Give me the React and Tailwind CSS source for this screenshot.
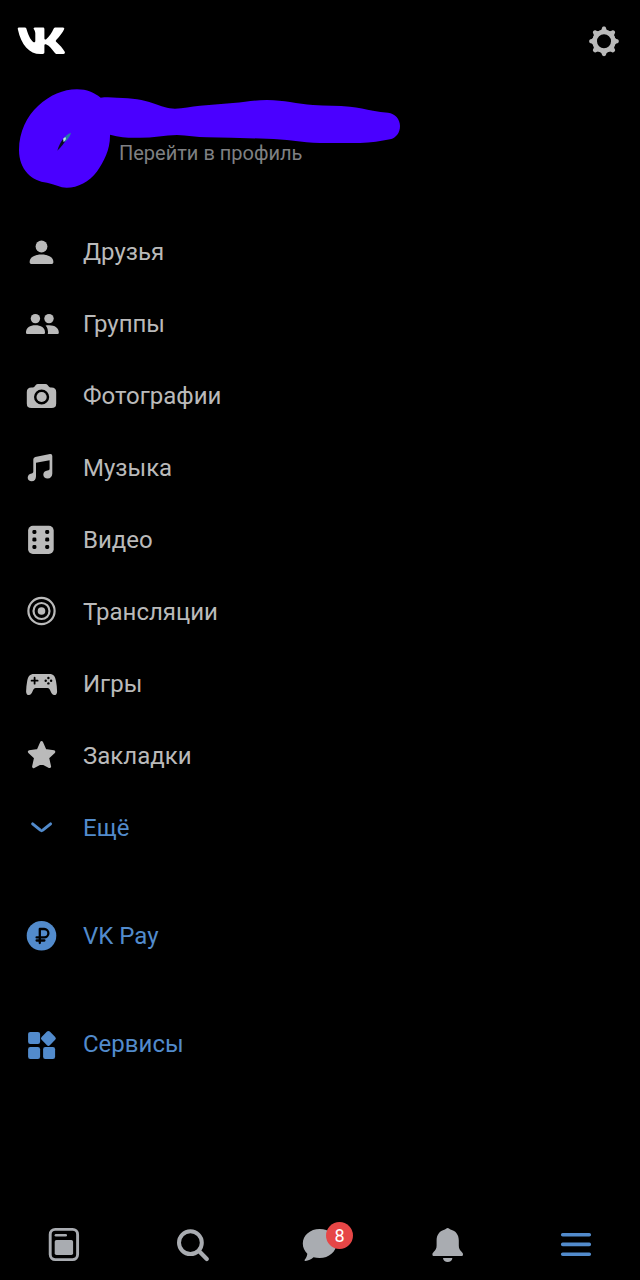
import { clsx } from 'clsx';

const Icon = ({ children }) => (
  <svg viewBox="0 0 40 40" className="w-10 h-10 flex-shrink-0" fill="currentColor" aria-hidden="true">
    {children}
  </svg>
);

const Logo = () => (
  <svg viewBox="0 0 50 28" className="h-7 w-[50px]" fill="#fff" aria-hidden="true">
    <path d="M1.8 .4H7.6C8.7 .4 9.2 .9 9.5 1.9C11 7.4 13.5 12.8 16.2 14.9C17.2 15.6 18.3 15.3 18.3 14V6.2C18.2 4.2 17.6 3.2 16.9 2.2C16.3 1.3 16.7 .4 17.8 .4H25.9C27 .4 27.4 1 27.4 2.1V11.6C27.4 12.7 28.4 12.9 29.2 12.2C32.3 9.5 34.8 5.7 36.6 1.8C37.1 .8 37.7 .4 38.8 .4H45.8C47.3 .4 47.6 1.3 47 2.6C45.6 5.7 42.6 9.6 39.4 12.7C38.5 13.6 38.6 14.2 39.4 15C43 18.3 45.8 21.4 47.6 24.6C48.4 26.1 47.7 27 46.3 27H40.1C39 27 38.4 26.6 37.7 25.7C35.1 22.1 32.4 18.7 29.4 17.4C28.2 16.9 27.4 17.3 27.4 18.6V25.3C27.4 26.5 26.9 27 25.7 27H23.6C12 27 4.2 17.6 .9 2.4C.6 1.2 .8 .4 1.8 .4Z" />
  </svg>
);

const teeth = [0, 45, 90, 135, 180, 225, 270, 315];

const GearIcon = () => (
  <Icon>
    <circle cx="20" cy="20.3" r="9.3" fill="none" stroke="currentColor" strokeWidth="4.6" />
    {teeth.map((angle) => (
      <path
        key={angle}
        transform={`rotate(${angle} 20 20.3)`}
        d="M14.8 10.2C17 9.6 17.7 8.4 18 6.9C18.4 5 21.6 5 22 6.9C22.3 8.4 23 9.6 25.2 10.2L24 12.4H16Z"
      />
    ))}
  </Icon>
);

const FriendsIcon = () => (
  <Icon>
    <circle cx="20.5" cy="14.5" r="5.9" />
    <path d="M8.7 29.5C8.7 25.3 13.6 22.4 20.5 22.4S32.3 25.3 32.3 29.5V30.6Q32.3 32 30.9 32H10.1Q8.7 32 8.7 30.6Z" />
  </Icon>
);

const GroupsIcon = () => (
  <Icon>
    <circle cx="14.4" cy="14.6" r="4.7" />
    <circle cx="28" cy="14.6" r="4.7" />
    <path d="M5 28.2C5 23.8 9 21.2 14.4 21.2S24 23.8 24 28.2V28.8Q24 30 22.8 30H6.2Q5 30 5 28.8Z" />
    <path d="M24.6 21.5C32.4 20.2 37.8 23.3 37.8 28.2V28.8Q37.8 30 36.6 30H26.8Q27.6 24.8 24.6 21.5Z" />
  </Icon>
);

const PhotosIcon = () => (
  <Icon>
    <path
      fillRule="evenodd"
      d="M14.6 9.2Q15.5 8 17 8H24.4Q25.9 8 26.8 9.2L28 10.7Q28.6 11.4 29.6 11.4H30.5Q35.2 11.4 35.2 16V27.4Q35.2 32 30.5 32H10.5Q5.8 32 5.8 27.4V16Q5.8 11.4 10.5 11.4H11.8Q12.8 11.4 13.4 10.7ZM20.6 13.4A7.6 7.6 0 1 0 20.6 28.6A7.6 7.6 0 1 0 20.6 13.4Z"
    />
    <circle cx="20.6" cy="21" r="5.1" />
  </Icon>
);

const MusicIcon = () => (
  <Icon>
    <path d="M12.3 11.4Q12.3 9.4 14.2 8.9L28.9 6.1Q31.3 5.7 31.3 8V25.4C31.3 28.3 29.6 30.4 26.5 30.4C24.2 30.4 22.3 29 22.3 26.7C22.3 24.3 24 22.9 26.5 22.5C28 22.3 28.6 22 28.6 20.6V12.2L15 14.8V28.3C15 31.3 13.4 33.3 10.6 33.3C8.4 33.3 6.7 31.9 6.7 29.8C6.7 27.3 8.3 25.9 10.6 25.5C11.8 25.3 12.3 24.8 12.3 23.6Z" />
  </Icon>
);

const VideoIcon = () => (
  <Icon>
    <rect x="7.1" y="5.8" width="25.6" height="28.2" rx="4.8" />
    {[12, 19.6, 27].map((y) => (
      <g key={y} fill="#000">
        <rect x="11.4" y={y - 2} width="4" height="4" rx="1.4" />
        <rect x="24.2" y={y - 2} width="4" height="4" rx="1.4" />
      </g>
    ))}
  </Icon>
);

const LiveIcon = () => (
  <Icon>
    <g fill="none" stroke="currentColor" strokeWidth="2.2">
      <circle cx="20.5" cy="19" r="13.1" />
      <circle cx="20.5" cy="19" r="8" />
    </g>
    <circle cx="20.5" cy="19" r="3.8" />
  </Icon>
);

const GamesIcon = () => (
  <Icon>
    <path d="M13 10H28.4C32.6 10 34.2 12.4 35 17C35.6 20.6 36.1 24 36.1 27.4C36.1 29.8 34.9 31 33.3 31C31.5 31 30.7 29.8 29.7 27.5C28.8 25.3 28.2 24 26.4 24H14.8C13 24 12.4 25.3 11.5 27.5C10.5 29.8 9.7 31 7.9 31C6.3 31 5.1 29.8 5.1 27.4C5.1 24 5.6 20.6 6.2 17C7 12.4 8.8 10 13 10Z" />
    <path d="M13.6 13.7V19.7M10.6 16.7H16.6" fill="none" stroke="#000" strokeWidth="1.8" strokeLinecap="round" />
    <g fill="#000">
      <circle cx="27.4" cy="14" r="1.2" />
      <circle cx="27.4" cy="19.4" r="1.2" />
      <circle cx="24.7" cy="16.7" r="1.2" />
      <circle cx="30.1" cy="16.7" r="1.2" />
    </g>
  </Icon>
);

const BookmarksIcon = () => (
  <Icon>
    <path
      d="M20.6 6.6L24 14.4L32.8 15.8L26.6 21.6L28.6 30.6L20.6 26.4L12.6 30.6L14.6 21.6L8.4 15.8L17.2 14.4Z"
      stroke="currentColor"
      strokeWidth="3"
      strokeLinejoin="round"
    />
  </Icon>
);

const ChevronIcon = () => (
  <Icon>
    <path
      d="M11.6 15.8L19.4 22.2Q20.6 23.1 21.8 22.2L29.6 15.8"
      fill="none"
      stroke="currentColor"
      strokeWidth="2.9"
      strokeLinecap="round"
    />
  </Icon>
);

const PayIcon = () => (
  <Icon>
    <circle cx="20.5" cy="19.8" r="14.8" />
    <path
      d="M18.8 27V13H23.2A4.2 4.2 0 0 1 23.2 21.4H15.6M15.6 24.5H23.4"
      fill="none"
      stroke="#000"
      strokeWidth="2.3"
      strokeLinecap="round"
      strokeLinejoin="round"
    />
  </Icon>
);

const ServicesIcon = () => (
  <Icon>
    <rect x="7.1" y="7.9" width="12" height="12" rx="2.2" />
    <rect x="7.1" y="23" width="12" height="12" rx="2.2" />
    <rect x="22.1" y="23" width="12" height="12" rx="2.2" />
    <rect x="21.6" y="8.6" width="11.6" height="11.6" rx="2" transform="rotate(45 27.4 14.4)" />
  </Icon>
);

const NewsIcon = () => (
  <Icon>
    <rect x="6.2" y="5.4" width="27.4" height="30.2" rx="5" fill="none" stroke="currentColor" strokeWidth="2.9" />
    <path d="M11.9 11.2H21.7" stroke="currentColor" strokeWidth="2.6" strokeLinecap="round" />
    <rect x="10.7" y="16" width="18.4" height="15" rx="1.8" />
  </Icon>
);

const SearchIcon = () => (
  <Icon>
    <g fill="none" stroke="currentColor" strokeLinecap="round">
      <circle cx="18.4" cy="18.7" r="11.4" strokeWidth="4" />
      <path d="M27.2 27.2L34.8 35" strokeWidth="4.2" />
    </g>
  </Icon>
);

const ChatIcon = () => (
  <Icon>
    <path d="M19.6 5C29 5 36.4 11.2 36.4 19.5S29 34 19.6 34C17.5 34 15.4 33.8 13.5 33.2C11.2 35.2 8.4 36.6 5.5 36.9C4.5 37 4.2 36.1 4.9 35.4C6.2 33.9 7.2 31.8 7.3 29.7C4.5 27 2.8 23.6 2.8 19.5C2.8 11.2 10.2 5 19.6 5Z" />
  </Icon>
);

const BellIcon = () => (
  <Icon>
    <path d="M19.7 4C20.8 4 21.2 5 22.5 5.4C28 6.8 30.8 10.8 30.8 16.4V21.6C30.8 24.6 31.6 26 33.8 28C34.7 28.9 35 29.5 35 30.4C35 31.4 34.3 32 33.3 32H6.1C5.1 32 4.4 31.4 4.4 30.4C4.4 29.5 4.7 28.9 5.6 28C7.8 26 8.6 24.6 8.6 21.6V16.4C8.6 10.8 11.4 6.8 16.9 5.4C18.2 5 18.6 4 19.7 4Z" />
    <path d="M15 34H24.4C24.2 36.6 22.2 38 19.7 38S15.2 36.6 15 34Z" />
  </Icon>
);

const MenuIcon = () => (
  <Icon>
    <path d="M6.7 10.7H33.3M6.7 20.4H33.3M6.7 30.2H33.3" stroke="currentColor" strokeWidth="3.6" strokeLinecap="round" />
  </Icon>
);

const menuItems = [
  { label: 'Друзья', icon: FriendsIcon },
  { label: 'Группы', icon: GroupsIcon },
  { label: 'Фотографии', icon: PhotosIcon },
  { label: 'Музыка', icon: MusicIcon },
  { label: 'Видео', icon: VideoIcon },
  { label: 'Трансляции', icon: LiveIcon },
  { label: 'Игры', icon: GamesIcon },
  { label: 'Закладки', icon: BookmarksIcon },
];

const tabs = [
  { label: 'Новости', icon: NewsIcon },
  { label: 'Поиск', icon: SearchIcon },
  { label: 'Сообщения', icon: ChatIcon, badge: 8 },
  { label: 'Уведомления', icon: BellIcon },
  { label: 'Меню', icon: MenuIcon, active: true },
];

const rowClass = 'flex items-center gap-[22px] w-full h-18 px-[21px] text-2xl text-left';

const MenuLink = ({ item, className }) => (
  <a href="#" className={clsx(rowClass, className)}>
    <item.icon />
    <span>{item.label}</span>
  </a>
);

const Profile = () => (
  <a href="#" className="relative block pt-14 pb-12 pl-[119px] text-xl leading-[30px] text-[#7f8083]">
    {/* Painted-over avatar and name */}
    <svg viewBox="0 82 420 120" className="absolute left-0 top-0 w-[420px] h-[120px]" aria-hidden="true">
      <path
        fill="#4a00ff"
        d="M19 150C19 132 27 116 38 106C50 95 63 89.3 77 89.3C87 89.3 94 92.5 100.7 97.7C106 97 112 97.3 117 97.7C125 98 131 98.3 137 99.3C143 100.3 148 101.6 153 103.3C161 106 168 108.7 175 108.7C183 108.3 191 106.5 200 105.7L233 103C246 102 255 100 267 100C276 100 283 101 290 102C298 103.3 305 104.7 313 105C326 105.6 338 105.7 350 106.7C358 107.5 366 109.5 373 110.7C378 111.5 383 112.3 388 112.7C395 113.5 400 119 400 126C400 133 396 138 390 139.3C381 141 371 143 360 143H320C302 142.5 285 139 267 138.7C247 138 227 138 207 137.3C197 137 187 135 177 134.9C165 135 153 137.7 140 137.7C130 138 121 137.7 110 134.7C110.3 150 104 161 97 171.5C89 182 78 187.7 66.7 187.7C60 187.7 55 184.5 47 182.8C32 181 19 170 19 150Z"
      />
      <path fill="#080b22" d="M57.3 150.8C58.5 147 60 142.5 63.5 138.5L66.5 139.5C64.5 142.5 61 147.5 57.3 150.8Z" />
      <path fill="#237ba8" d="M63 139.5C65 136.5 68 133.5 71 132.8C70.3 136 68 139.5 64.8 142Z" />
      <path fill="#bfe5dd" d="M63.2 138.6L65.4 137L66 139L63.6 142.3Z" />
    </svg>
    Перейти в профиль
  </a>
);

const App = () => {
  return (
    <div className="min-h-screen flex flex-col bg-black text-[#bababa] font-['Roboto','Noto_Sans',sans-serif]">
      <header className="flex items-center justify-between h-[82px] pl-[17px] pr-4">
        <a href="#" aria-label="VK">
          <Logo />
        </a>
        <button type="button" aria-label="Настройки">
          <GearIcon />
        </button>
      </header>

      <Profile />

      <main className="flex-1">
        <ul>
          {menuItems.map((item) => (
            <li key={item.label}>
              <MenuLink item={item} />
            </li>
          ))}
        </ul>
        <button type="button" className={clsx(rowClass, 'text-[#528bcc]')}>
          <ChevronIcon />
          <span>Ещё</span>
        </button>
        <MenuLink item={{ label: 'VK Pay', icon: PayIcon }} className="mt-9 text-[#528bcc]" />
        <MenuLink item={{ label: 'Сервисы', icon: ServicesIcon }} className="mt-9 text-[#528bcc]" />
      </main>

      {/* Bottom tab bar */}
      <nav className="grid grid-cols-5 h-18">
        {tabs.map((tab) => (
          <a
            key={tab.label}
            href="#"
            aria-label={tab.label}
            className={clsx('flex items-center justify-center', tab.active ? 'text-[#528bcc]' : 'text-[#a9acb1]')}
          >
            <span className="relative">
              <tab.icon />
              {tab.badge && (
                <span className="absolute left-[26px] -top-0.5 w-[27px] h-[27px] rounded-full bg-[#e64646] text-white text-lg leading-[27px] text-center">
                  {tab.badge}
                </span>
              )}
            </span>
          </a>
        ))}
      </nav>
    </div>
  );
};

export default App;
